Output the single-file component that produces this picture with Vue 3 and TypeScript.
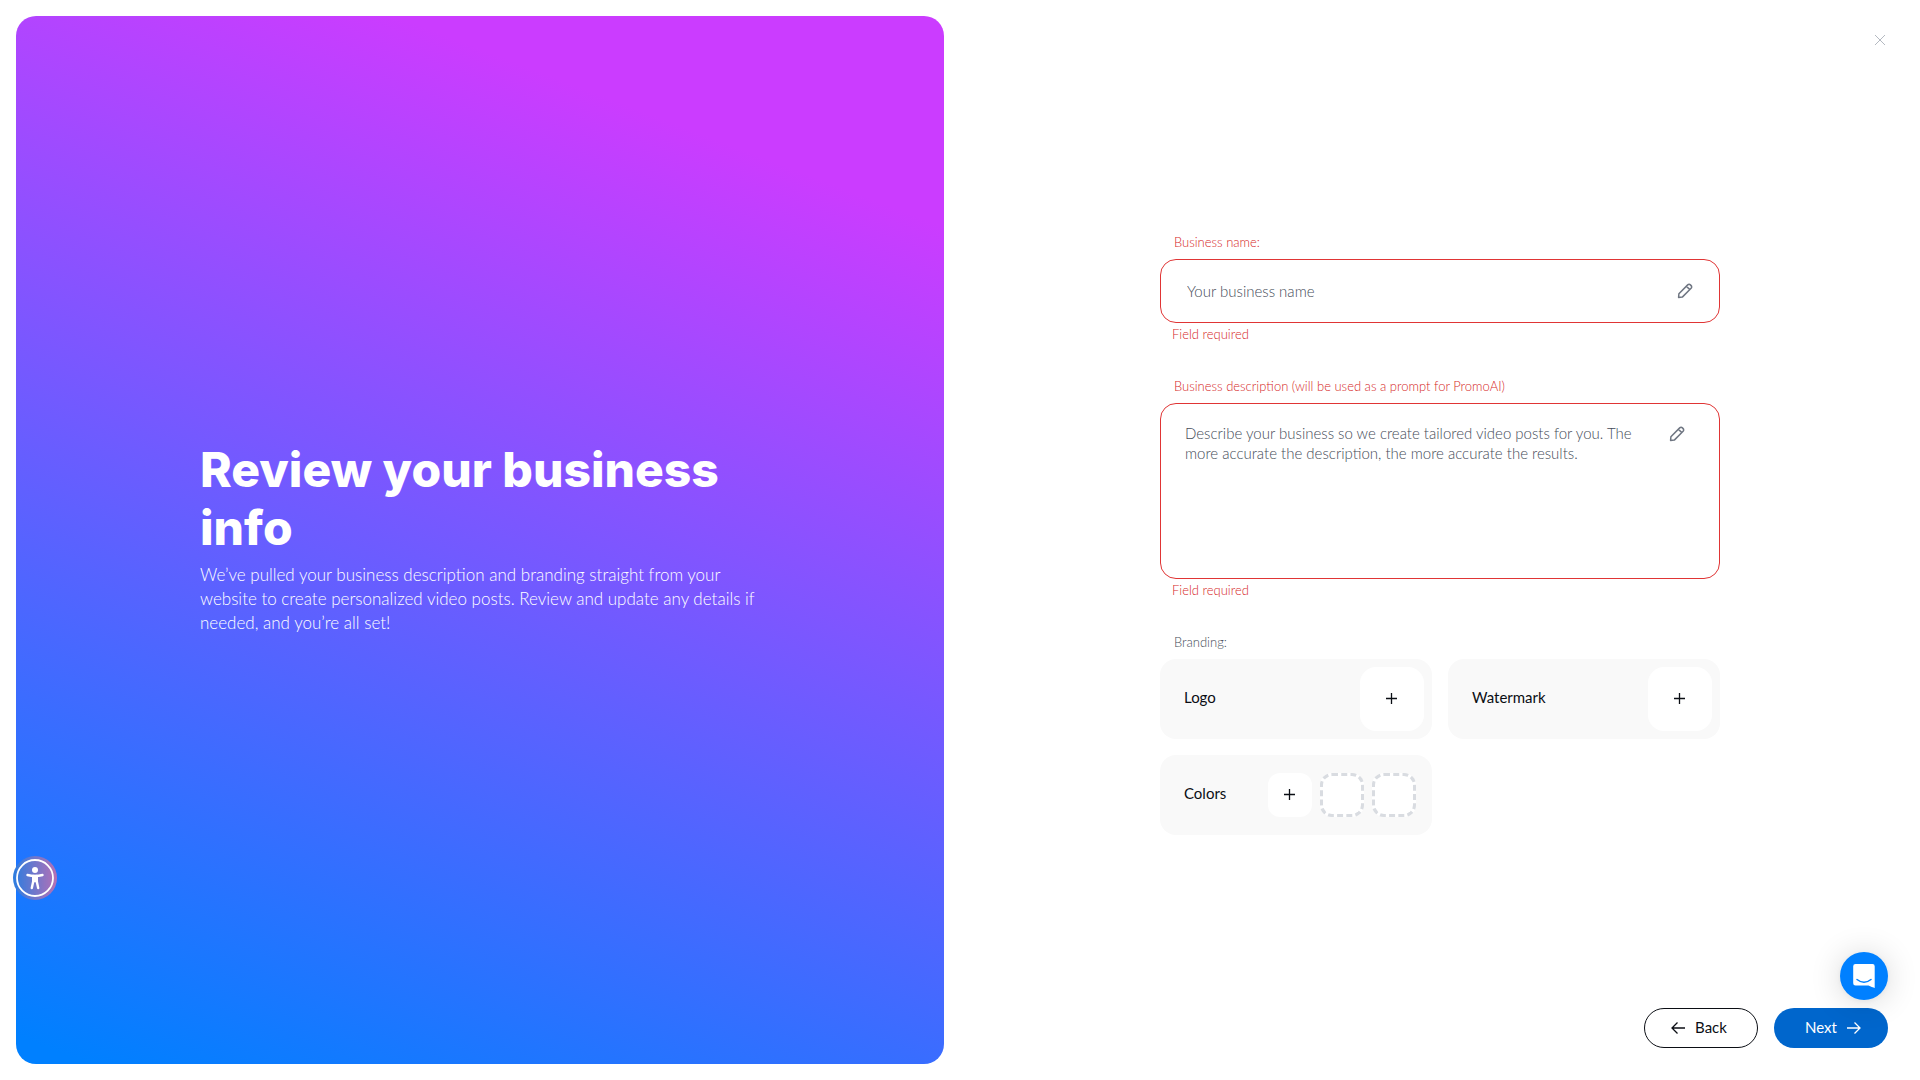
<script setup lang="ts">
import { ref } from 'vue'

const businessName = ref('')
const description = ref('')
const assets = ['Logo', 'Watermark']
</script>

<template>
  <div class="page">
    <div class="side">
      <section class="hero">
        <div class="hero-copy">
          <h1>Review your business info</h1>
          <p>
            We’ve pulled your business description and branding straight from your website to create
            personalized video posts. Review and update any details if needed, and you’re all set!
          </p>
        </div>
      </section>
    </div>

    <main class="panel">
      <header class="top">
        <button class="close" type="button" aria-label="Close">
          <svg width="10" height="10" viewBox="0 0 10 10"><path d="M0 0l10 10M10 0L0 10" /></svg>
        </button>
      </header>

      <form class="form" @submit.prevent>
        <div class="field">
          <label class="label error" for="name">Business name:</label>
          <div class="box box-name">
            <input id="name" v-model="businessName" type="text" placeholder="Your business name" />
            <svg class="pencil" width="16" height="16" viewBox="0 0 16 16">
              <path d="M1.600 14.400l.3-3.700L10.700 1.900a1.900 1.900 0 0 1 2.700 0l.7.7a1.900 1.900 0 0 1 0 2.700L5.300 14.100zM9.400 3.200l3.400 3.400" />
            </svg>
          </div>
          <span class="message">Field required</span>
        </div>

        <div class="field">
          <label class="label error" for="description">Business description (will be used as a prompt for PromoAI)</label>
          <div class="box box-description">
            <textarea
              id="description"
              v-model="description"
              placeholder="Describe your business so we create tailored video posts for you. The more accurate the description, the more accurate the results."
            ></textarea>
            <svg class="pencil" width="16" height="16" viewBox="0 0 16 16">
              <path d="M1.600 14.400l.3-3.700L10.700 1.900a1.900 1.900 0 0 1 2.700 0l.7.7a1.900 1.900 0 0 1 0 2.700L5.300 14.100zM9.400 3.200l3.400 3.400" />
            </svg>
          </div>
          <span class="message">Field required</span>
        </div>

        <div class="field">
          <span class="label">Branding:</span>
          <div class="cards">
            <div v-for="asset in assets" :key="asset" class="card">
              <span class="card-name">{{ asset }}</span>
              <button class="add" type="button" :aria-label="`Add ${asset}`">
                <svg width="12" height="12" viewBox="0 0 12 12"><path d="M5.500 0v11M0 5.500h11" /></svg>
              </button>
            </div>
            <div class="card card-colors">
              <span class="card-name">Colors</span>
              <div class="swatches">
                <button class="swatch" type="button" aria-label="Add color">
                  <svg width="12" height="12" viewBox="0 0 12 12"><path d="M5.500 0v11M0 5.500h11" /></svg>
                </button>
                <div class="swatch empty"></div>
                <div class="swatch empty"></div>
              </div>
            </div>
          </div>
        </div>
      </form>

      <footer class="actions">
        <button class="btn back" type="button">
          <svg width="14" height="12" viewBox="0 0 14 12"><path d="M14 6H1M6.500 0.500L1 6l5.500 5.500" /></svg>
          <span>Back</span>
        </button>
        <button class="btn next" type="button">
          <span>Next</span>
          <svg width="14" height="12" viewBox="0 0 14 12"><path d="M0 6h13M7.500 0.500L13 6l-5.500 5.500" /></svg>
        </button>
      </footer>
    </main>

    <button class="accessibility" type="button" aria-label="Accessibility menu">
      <svg width="44" height="44" viewBox="0 0 44 44">
        <circle cx="22" cy="22" r="18" fill="none" stroke="#fff" stroke-width="1.800" />
        <circle cx="22" cy="14" r="3" fill="#fff" />
        <path d="M14.500 19c3 .7 5 .9 7.500.9s4.500-.2 7.500-.9" />
        <path d="M20.200 20v5.500L18.800 32M23.800 20v5.500L25.200 32M22 20v5" />
      </svg>
    </button>

    <button class="chat" type="button" aria-label="Open chat">
      <svg width="22" height="24" viewBox="0 0 22 24">
        <path fill="#fff" d="M2.500 0h17A2.300 2.300 0 0 1 21.700 2.300V24s-3.200-1-6.200-2.500h-13A2.300 2.300 0 0 1 .2 19.200V2.300A2.300 2.300 0 0 1 2.500 0z" />
        <path d="M4 15.500c4.300 3.400 9.700 3.400 14 0" fill="none" stroke="#0080ff" stroke-width="1.500" stroke-linecap="round" />
      </svg>
    </button>
  </div>
</template>

<style>
body {
  background: #fff;
}
</style>

<style scoped>
* {
  box-sizing: border-box;
}

.page {
  display: grid;
  grid-template-columns: 1fr 1fr;
  min-height: 100vh;
  font-family: Lato, 'Open Sans', sans-serif;
  color: #0b0e14;
}

button,
input,
textarea {
  font: inherit;
  color: inherit;
  margin: 0;
  padding: 0;
  border: 0;
  background: none;
}

button {
  cursor: pointer;
}

svg {
  display: block;
  flex: none;
}

.side {
  display: flex;
  padding: 16px;
}

.hero {
  flex: 1;
  display: flex;
  align-items: center;
  justify-content: center;
  padding: 0 16px;
  border-radius: 20px;
  background: linear-gradient(21deg, #0080ff 2%, #cb3cff 85%);
  color: #fff;
}

.hero-copy {
  width: 100%;
  max-width: 560px;
  padding-bottom: 4px;
}

h1 {
  margin: 0 0 6px;
  font-family: Inter, sans-serif;
  font-size: 48px;
  line-height: 58px;
  font-weight: 800;
}

p {
  margin: 0;
  font-size: 17px;
  line-height: 24px;
  font-weight: 300;
}

.panel {
  display: flex;
  flex-direction: column;
  padding: 16px 32px 32px;
}

.top {
  display: flex;
  justify-content: flex-end;
}

.close {
  display: grid;
  place-items: center;
  width: 16px;
  height: 48px;
}

.close svg {
  stroke: #b4b9c1;
  stroke-width: 1;
}

.form {
  display: flex;
  flex-direction: column;
  gap: 34px;
  width: 100%;
  max-width: 560px;
  margin: auto;
  padding-bottom: 4px;
}

.field {
  display: flex;
  flex-direction: column;
}

.label {
  padding: 0 14px;
  margin-bottom: 8px;
  font-size: 13px;
  line-height: 18px;
  font-weight: 300;
  color: #454c58;
}

.label.error,
.message {
  color: #d61f1f;
}

.message {
  padding: 2px 12px 0;
  font-size: 13px;
  line-height: 18px;
  font-weight: 300;
}

.box {
  display: flex;
  border: 1px solid #e03535;
  border-radius: 16px;
}

.box-name {
  align-items: center;
  height: 64px;
  padding: 0 26px;
}

.box-description {
  height: 176px;
  padding: 19px 34px 20px 24px;
  gap: 20px;
}

.box-description .pencil {
  margin-top: 3px;
}

.box input,
.box textarea {
  flex: 1;
  min-width: 0;
  outline: 0;
  resize: none;
  font-size: 15px;
  line-height: 20px;
  font-weight: 300;
}

input::placeholder,
textarea::placeholder {
  color: #454c58;
  opacity: 1;
}

.pencil {
  fill: none;
  stroke: #6f7682;
  stroke-width: 1.500;
  stroke-linejoin: round;
}

.cards {
  display: grid;
  grid-template-columns: 1fr 1fr;
  gap: 16px;
}

.card {
  display: flex;
  align-items: center;
  justify-content: space-between;
  height: 80px;
  padding: 0 8px 0 24px;
  border-radius: 16px;
  background: #f9f9f9;
  font-size: 15px;
}

.card-name {
  padding-bottom: 4px;
}

.btn span {
  padding-bottom: 2px;
}

.card-colors {
  padding-right: 16px;
}

.add,
.swatch {
  display: grid;
  place-items: center;
  background: #fff;
}

.add {
  width: 64px;
  height: 64px;
  border-radius: 16px;
}

.add svg,
.swatch svg {
  stroke: #0b0e14;
  stroke-width: 1.300;
}

.swatches {
  display: flex;
  gap: 8px;
}

.swatch {
  width: 44px;
  height: 44px;
  border-radius: 12px;
}

.empty {
  border: 3px dashed #d9dce1;
}

.actions {
  display: flex;
  justify-content: flex-end;
  gap: 16px;
}

.btn {
  display: flex;
  align-items: center;
  justify-content: center;
  gap: 10px;
  width: 114px;
  height: 40px;
  border-radius: 20px;
  font-size: 15px;
}

.btn svg {
  fill: none;
  stroke: currentColor;
  stroke-width: 1.300;
}

.back {
  padding-right: 4px;
  border: 1px solid #0b0e14;
}

.next {
  padding-left: 4px;
  background: #0066cc;
  color: #fff;
}

.accessibility {
  position: fixed;
  left: 13px;
  bottom: 180px;
  width: 44px;
  height: 44px;
  border-radius: 50%;
  background: linear-gradient(90deg, #2b7de0, #b770b5);
}

.accessibility path {
  fill: none;
  stroke: #fff;
  stroke-width: 2.400;
  stroke-linecap: round;
}

.chat {
  position: fixed;
  right: 32px;
  bottom: 80px;
  display: grid;
  place-items: center;
  width: 48px;
  height: 48px;
  border-radius: 50%;
  background: #0080ff;
  box-shadow: 0 1px 6px rgba(0, 0, 0, 0.06), 0 2px 32px rgba(0, 0, 0, 0.16);
}
</style>
